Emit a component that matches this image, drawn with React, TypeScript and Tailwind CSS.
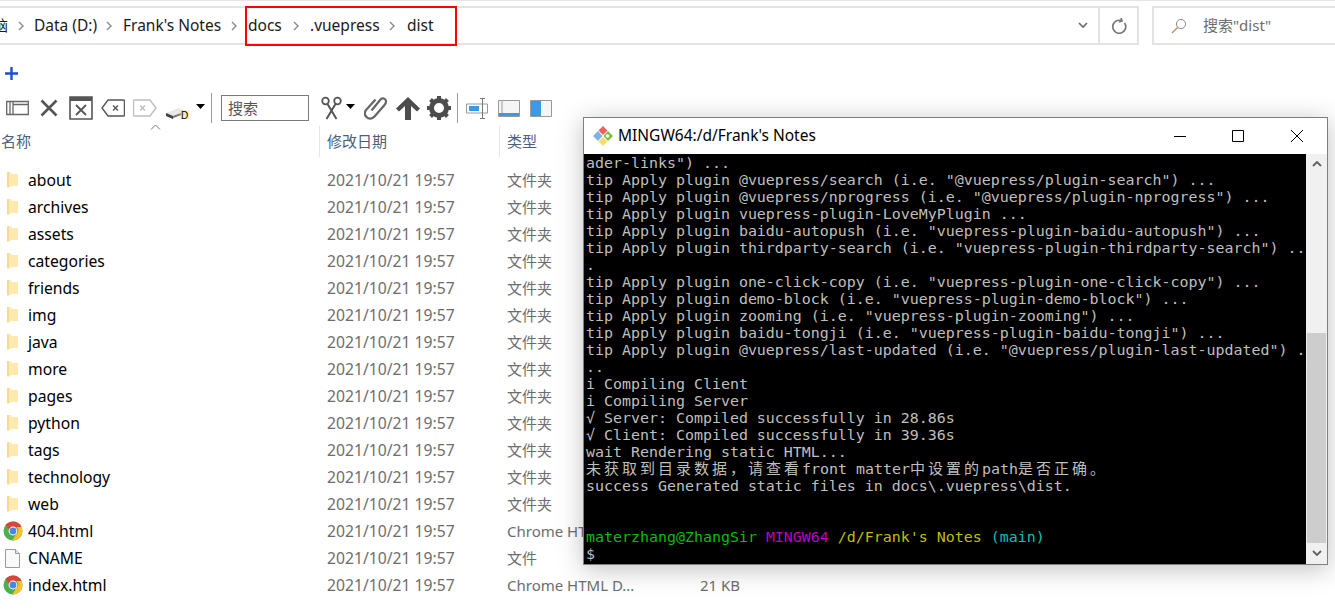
import React from 'react'

const uiFont = 'font-["Noto_Sans","Noto_Sans_CJK_SC",sans-serif]'

const folders = ['about', 'archives', 'assets', 'categories', 'friends', 'img', 'java', 'more', 'pages', 'python', 'tags', 'technology', 'web']

const plugins = [
  'ader-links") ...',
  'tip Apply plugin @vuepress/search (i.e. "@vuepress/plugin-search") ...',
  'tip Apply plugin @vuepress/nprogress (i.e. "@vuepress/plugin-nprogress") ...',
  'tip Apply plugin vuepress-plugin-LoveMyPlugin ...',
  'tip Apply plugin baidu-autopush (i.e. "vuepress-plugin-baidu-autopush") ...',
  'tip Apply plugin thirdparty-search (i.e. "vuepress-plugin-thirdparty-search") ..',
  '.',
  'tip Apply plugin one-click-copy (i.e. "vuepress-plugin-one-click-copy") ...',
  'tip Apply plugin demo-block (i.e. "vuepress-plugin-demo-block") ...',
  'tip Apply plugin zooming (i.e. "vuepress-plugin-zooming") ...',
  'tip Apply plugin baidu-tongji (i.e. "vuepress-plugin-baidu-tongji") ...',
  'tip Apply plugin @vuepress/last-updated (i.e. "@vuepress/plugin-last-updated") .',
  '..',
  'i Compiling Client',
  'i Compiling Server',
  '√ Server: Compiled successfully in 28.86s',
  '√ Client: Compiled successfully in 39.36s',
  'wait Rendering static HTML...',
]

const Chevron = () => (
  <svg width="8" height="10" viewBox="0 0 8 10" className="shrink-0">
    <path d="M2 1l4 4-4 4" fill="none" stroke="#8a8a8a" strokeWidth="1.4" />
  </svg>
)

const FolderIcon = () => (
  <svg width="13" height="18" viewBox="0 0 13 18" className="shrink-0">
    <path d="M1 1h4l1 2h6v12H5l-2 2H1z" fill="#ffeebb" />
    <path d="M1 1h2v15H1z" fill="#f8da8e" />
    <path d="M3 3h9v12H3z" fill="#ffe9ad" />
  </svg>
)

const ChromeIcon = () => (
  <svg width="20" height="20" viewBox="0 0 20 20" className="shrink-0">
    <circle cx="10" cy="10" r="9.5" fill="#4caf50" />
    <path d="M10 .5a9.5 9.5 0 0 1 8.6 5.5H10a4 4 0 0 0-3.8 2.7L2.6 4A9.5 9.5 0 0 1 10 .5z" fill="#d9453a" />
    <path d="M18.6 6A9.5 9.5 0 0 1 9.3 19.5l3.9-6.4A4 4 0 0 0 13.4 6z" fill="#fbc02d" />
    <circle cx="10" cy="10" r="4.4" fill="#fff" />
    <circle cx="10" cy="10" r="3.4" fill="#4a86e8" />
  </svg>
)

const FileIcon = () => (
  <svg width="15" height="19" viewBox="0 0 15 19" className="shrink-0">
    <path d="M.5.5h10l4 4v14H.5z" fill="#f7f9fa" stroke="#9b9b9b" />
    <path d="M10.5.5v4h4" fill="#e4e4e4" stroke="#9b9b9b" />
  </svg>
)

const Row = ({ icon, name, type, size }: { icon: React.ReactNode; name: string; type: string; size?: string }) => (
  <div className="flex h-[27px] items-center">
    <div className="flex w-[327px] shrink-0 items-center">
      <div className="flex w-[28px] shrink-0 justify-center pr-[3px]">{icon}</div>
      <span className="text-[15.7px] text-black">{name}</span>
    </div>
    <span className="w-[180px] shrink-0 text-[15.7px] text-[#6d6d6d]">2021/10/21 19:57</span>
    <span className="w-[130px] shrink-0 overflow-hidden text-[15px] whitespace-nowrap text-[#6d6d6d]">{type}</span>
    <span className="w-[103px] shrink-0 text-right text-[15px] text-[#6d6d6d]">{size}</span>
  </div>
)

const Caret = () => (
  <svg width="9" height="5" viewBox="0 0 9 5" className="shrink-0">
    <path d="M0 0h9L4.500 5z" fill="#000" />
  </svg>
)

const Toolbar = () => (
  <div className="flex h-[32px] items-center pl-[6px] text-[#555]">
    <svg width="23" height="16" viewBox="0 0 23 16" className="shrink-0">
      <path d="M.7 1.500h21.600v13H.7zM4 1.500v13M7 1.500v13M7 4.500h15" fill="none" stroke="#666" strokeWidth="1.300" />
    </svg>
    <svg width="18" height="18" viewBox="0 0 18 18" className="ml-[11px] shrink-0">
      <path d="M1.500 1.500l15 15M16.500 1.500l-15 15" stroke="#555" strokeWidth="2.600" />
    </svg>
    <svg width="24" height="24" viewBox="0 0 24 24" className="ml-[11px] shrink-0">
      <path d="M1 1h22v22H1z" fill="#fff" stroke="#555" strokeWidth="1.600" />
      <path d="M1 1h22v4H1z" fill="#555" />
      <path d="M7 9l10 10M17 9L7 19" stroke="#555" strokeWidth="1.800" />
    </svg>
    <svg width="24" height="18" viewBox="0 0 24 18" className="ml-[8px] shrink-0">
      <path d="M7 1h15.500a1 1 0 0 1 1 1v14a1 1 0 0 1-1 1H7L1 9z" fill="none" stroke="#555" strokeWidth="1.400" />
      <path d="M12 6.500l5 5M17 6.500l-5 5" stroke="#555" strokeWidth="1.400" />
    </svg>
    <svg width="24" height="18" viewBox="0 0 24 18" className="ml-[8px] shrink-0">
      <path d="M17 1H1.500a1 1 0 0 0-1 1v14a1 1 0 0 0 1 1H17l6-8z" fill="none" stroke="#bdbdbd" strokeWidth="1.400" />
      <path d="M7 6.500l5 5M12 6.500l-5 5" stroke="#bdbdbd" strokeWidth="1.400" />
    </svg>
    <svg width="23" height="12" viewBox="0 0 23 12" className="mt-[10px] ml-[9px] shrink-0">
      <path d="M0 6l13-5 6 3v3L7 12z" fill="#e8e8e8" />
      <path d="M0 6l7 3v3L0 9z" fill="#3f3f3f" />
      <path d="M7 9l8-3v2l-8 3z" fill="#777" />
      <rect x="14" y="3" width="9" height="9" fill="#ffd75a" opacity=".4" />
      <text x="15" y="11.500" fontSize="10" fontFamily="Liberation Sans" fill="#000">D</text>
    </svg>
    <div className="mb-[4px] ml-[7px] flex">
      <Caret />
    </div>
    <div className="ml-[6px] h-[30px] w-px bg-[#9a9a9a]" />
    <div className="ml-[9px] flex h-[26px] w-[88px] items-center border border-[#7a7a7a] pl-[6px] text-[15px] text-[#555]">搜索</div>
    <svg width="21" height="24" viewBox="0 0 21 24" className="ml-[12px] shrink-0">
      <circle cx="4.500" cy="5" r="3.300" fill="none" stroke="#555" strokeWidth="1.800" />
      <circle cx="16.500" cy="5" r="3.300" fill="none" stroke="#555" strokeWidth="1.800" />
      <path d="M6.500 8l9 15M14.500 8l-9 15" stroke="#555" strokeWidth="2" />
    </svg>
    <div className="mb-[4px] ml-[4px] flex">
      <Caret />
    </div>
    <svg width="24" height="24" viewBox="0 0 24 24" className="ml-[9px] shrink-0">
      <path d="M8 15L17 4c2-2 5-1 5.500 1.500.300 1.500-.500 2.800-1.500 4L11 21c-2.500 2.800-6 2.500-8 .5s-2.300-5 0-7.500l9-10" fill="none" stroke="#666" strokeWidth="2.200" transform="translate(-.5 -.5)" />
    </svg>
    <svg width="24" height="23" viewBox="0 0 24 23" className="ml-[8px] shrink-0">
      <path d="M12 0l12 11.500-3 3-6-5.500v14H9V9l-6 5.500-3-3z" fill="#4d4d4d" />
    </svg>
    <svg width="24" height="24" viewBox="0 0 24 24" className="ml-[7px] shrink-0">
      <circle cx="12" cy="12" r="7.500" fill="none" stroke="#4d4d4d" strokeWidth="5" />
      <path d="M12 0v24M0 12h24M3.500 3.500l17 17M20.500 3.500l-17 17" stroke="#4d4d4d" strokeWidth="4" strokeDasharray="5 14 5" />
    </svg>
    <div className="ml-[6px] h-[30px] w-px bg-[#9a9a9a]" />
    <svg width="22" height="21" viewBox="0 0 22 21" className="ml-[8px] shrink-0">
      <path d="M.5 6h21v9H.5z" fill="#fff" stroke="#999" />
      <rect x="3" y="8" width="10" height="5" fill="#3b99e5" />
      <path d="M14 .5h5M14 20.500h5M16.500 1v19" stroke="#777" fill="none" />
    </svg>
    <svg width="22" height="17" viewBox="0 0 22 17" className="ml-[10px] shrink-0">
      <path d="M.5.500h21v16H.5z" fill="#f5f5f5" stroke="#999" />
      <path d="M1 13h20v3H1z" fill="#3b99e5" />
      <path d="M4 1v12" stroke="#999" />
    </svg>
    <svg width="22" height="17" viewBox="0 0 22 17" className="ml-[10px] shrink-0">
      <path d="M.5.500h21v16H.5z" fill="#f5f5f5" stroke="#999" />
      <path d="M1 1h10v15H1z" fill="#3b99e5" />
    </svg>
  </div>
)

const TitleButtons = () => (
  <div className="flex items-center">
    <svg width="12" height="12" viewBox="0 0 12 12" className="mr-[46px]">
      <path d="M0 6.500h12" stroke="#000" />
    </svg>
    <svg width="12" height="12" viewBox="0 0 12 12" className="mr-[47px]">
      <path d="M.5.500h11v11H.5z" fill="none" stroke="#000" />
    </svg>
    <svg width="12" height="12" viewBox="0 0 12 12" className="mr-[24px]">
      <path d="M0 0l12 12M12 0L0 12" stroke="#000" />
    </svg>
  </div>
)

const GitIcon = () => (
  <svg width="20" height="20" viewBox="0 0 20 20" className="shrink-0">
    <path d="M10 0l4.500 4.500-4.500 4.500-4.500-4.500z" fill="#e8635a" />
    <path d="M15 5l5 5-5 5-4.500-5z" fill="#7cbf3f" />
    <circle cx="14.500" cy="10" r="1.800" fill="#fff" />
    <path d="M10 11l4.500 4.500L10 20l-4.500-4.500z" fill="#f9dc72" />
    <path d="M5 5l4.500 5L5 15l-5-5z" fill="#7fb2e5" />
  </svg>
)

const Terminal = () => (
  <div className="absolute top-[117px] left-[583px] flex h-[448px] w-[745px] flex-col border border-[#7f7f7f] bg-white shadow-[0_4px_24px_rgba(0,0,0,0.25)]">
    <div className="flex h-[36px] shrink-0 items-center justify-between pl-[9px]">
      <div className="flex items-center gap-[5px]">
        <GitIcon />
        <span className="text-[15.5px] text-black">MINGW64:/d/Frank's Notes</span>
      </div>
      <TitleButtons />
    </div>
    <div className="flex min-h-0 flex-1">
      <div className='flex-1 overflow-hidden bg-black pt-[1px] pl-[2px] font-["DejaVu_Sans_Mono","Noto_Sans_CJK_SC",monospace] text-[14.95px] leading-[17px] whitespace-pre text-[#bfbfbf]'>
        {plugins.map((line, i) => (
          <div key={i} className="h-[17px]">{line}</div>
        ))}
        <div className="h-[17px]">
          <span className="text-[15px] tracking-[3px]">未获取到目录数据，请查看</span>front matter<span className="text-[15px] tracking-[3px]">中设置的</span>path<span className="text-[15px] tracking-[3px]">是否正确。</span>
        </div>
        <div className="h-[17px]">success Generated static files in docs\.vuepress\dist.</div>
        <div className="h-[17px]" />
        <div className="h-[17px]" />
        <div className="h-[17px]">
          <span className="text-[#00bf00]">materzhang@ZhangSir </span>
          <span className="text-[#bf00bf]">MINGW64 </span>
          <span className="text-[#bfbf00]">/d/Frank's Notes </span>
          <span className="text-[#00bfbf]">(main)</span>
        </div>
        <div className="h-[17px]">$</div>
      </div>
      <div className="flex w-[21px] shrink-0 flex-col bg-[#f0f0f0]">
        <div className="flex h-[20px] shrink-0 items-center justify-center">
          <svg width="10" height="6" viewBox="0 0 10 6"><path d="M1 5l4-4 4 4" fill="none" stroke="#606060" strokeWidth="1.800" /></svg>
        </div>
        <div className="mx-[1px] mt-[159px] h-[210px] shrink-0 bg-[#cdcdcd]" />
        <div className="flex h-[20px] shrink-0 items-center justify-center">
          <svg width="10" height="6" viewBox="0 0 10 6"><path d="M1 1l4 4 4-4" fill="none" stroke="#606060" strokeWidth="1.800" /></svg>
        </div>
      </div>
    </div>
  </div>
)

export default function App() {
  return (
    <div className={`relative h-[614px] w-[1335px] overflow-hidden bg-white ${uiFont}`}>
      <div className="h-px bg-[#e5e5e5]" />
      {/* address bar */}
      <div className="mt-[5px] flex h-[39px] items-stretch">
        <div className="flex min-w-0 flex-1 items-center overflow-hidden border-y-2 border-[#e3e3e3] text-[15.5px] text-[#1a1a1a]">
          <span className="-ml-[7px] w-[24px] shrink-0 text-[15px]">脑</span>
          <Chevron />
          <span className="ml-[9px] w-[71px] shrink-0 whitespace-nowrap">Data (D:)</span>
          <Chevron />
          <span className="ml-[10px] w-[107px] shrink-0 whitespace-nowrap">Frank's Notes</span>
          <Chevron />
          <span className="ml-[10px] w-[44px] shrink-0">docs</span>
          <Chevron />
          <span className="ml-[10px] w-[78px] shrink-0">.vuepress</span>
          <Chevron />
          <span className="ml-[11px]">dist</span>
        </div>
        <div className="flex w-[39px] shrink-0 items-center border-y-2 border-r-2 border-[#e3e3e3] pl-[17px]">
          <svg width="10" height="7" viewBox="0 0 10 7" className="shrink-0">
            <path d="M1 1l4 4 4-4" fill="none" stroke="#6b6b6b" strokeWidth="1.700" />
          </svg>
        </div>
        <div className="flex w-[39px] shrink-0 items-center justify-center border-y-2 border-r-2 border-[#e3e3e3]">
          <svg width="16" height="16" viewBox="0 0 16 16">
            <path d="M13.500 5a6.500 6.500 0 1 1-3-2.300M10 0l1 3-3 1" fill="none" stroke="#777" strokeWidth="1.700" />
          </svg>
        </div>
        <div className="w-[13px] shrink-0" />
        <div className="flex w-[183px] shrink-0 items-center border-y-2 border-l-2 border-[#e3e3e3] pl-[17px] text-[15px] text-[#6d6d6d]">
          <svg width="16" height="16" viewBox="0 0 16 16" className="mr-[16px] shrink-0">
            <circle cx="10" cy="6" r="4.600" fill="none" stroke="#888" />
            <path d="M6.500 9.500L1 15" stroke="#b38b5a" strokeWidth="1.200" />
          </svg>
          搜索"dist"
        </div>
        {/* red annotation round the last three crumbs */}
        <div className="absolute top-[6px] left-[245px] h-[40px] w-[212px] border-2 border-[#ff0000]" />
      </div>

      <div className="mt-[16px] flex h-[24px] items-center pl-[5px]">
        <svg width="13" height="13" viewBox="0 0 13 13">
          <path d="M6.500 0v13M0 6.500h13" stroke="#1a4fd0" strokeWidth="2.400" />
        </svg>
      </div>

      <div className="mt-[7px]">
        <Toolbar />
      </div>

      {/* header */}
      <div className="relative mt-[2px] flex h-[31px] items-center text-[15px] text-[#4c607a]">
        <span className="w-[319px] shrink-0 pl-[1px]">名称</span>
        <span className="h-full w-px shrink-0 bg-[#e5e5e5]" />
        <span className="w-[179px] shrink-0 pl-[7px]">修改日期</span>
        <span className="h-full w-px shrink-0 bg-[#e5e5e5]" />
        <span className="pl-[7px]">类型</span>
        <svg width="11" height="6" viewBox="0 0 11 6" className="absolute top-[-2px] left-[150px]">
          <path d="M1 5.500l4.500-4.500 4.500 4.500" fill="none" stroke="#777" />
        </svg>
      </div>

      {/* files */}
      <div className="mt-[10px]">
        {folders.map((name) => (
          <Row key={name} icon={<FolderIcon />} name={name} type="文件夹" />
        ))}
        <Row icon={<ChromeIcon />} name="404.html" type="Chrome HTML D..." />
        <Row icon={<FileIcon />} name="CNAME" type="文件" />
        <Row icon={<ChromeIcon />} name="index.html" type="Chrome HTML D..." size="21 KB" />
      </div>

      <Terminal />
    </div>
  )
}
